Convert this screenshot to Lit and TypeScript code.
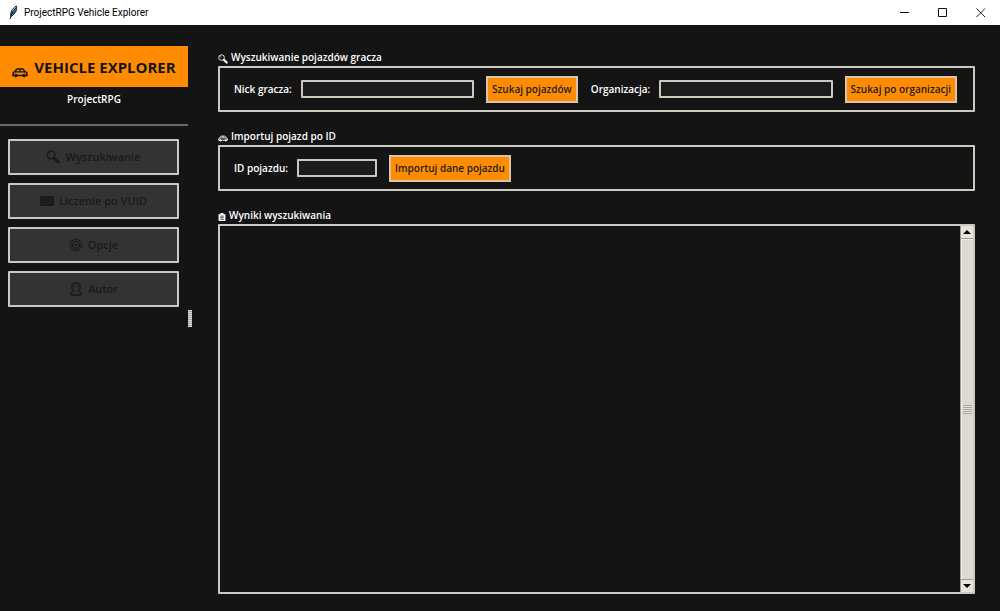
import { LitElement, html, css, svg } from "lit";
import { customElement } from "lit/decorators.js";

const lens = svg`<circle cx="5" cy="5" r="3.9" fill="none" stroke="currentColor" stroke-width="1.2"/><path d="M8.4 8.4 L12.2 12" stroke="currentColor" stroke-width="3" stroke-linecap="round"/><path d="M2.8 5 A2.2 2.2 0 0 1 5 2.8" fill="none" stroke="currentColor" stroke-width=".6"/>`;
const keypad = svg`<path d="M0 2H14V12H0Z" fill="currentColor"/><path d="M1.5 4.5H12.5M1.5 7H12.5M1.5 9.5H12.5" stroke="#333" stroke-width=".6" stroke-dasharray="1.6 .8"/>`;
const gear = svg`<circle cx="7" cy="7" r="5.6" fill="none" stroke="currentColor" stroke-width="1.3" stroke-dasharray="3.4 .6"/><circle cx="7" cy="7" r="3.6" fill="none" stroke="currentColor" stroke-width="1"/><circle cx="7" cy="7" r="1.2" fill="currentColor"/><path d="M7 3.6V5M7 9V10.4M3.6 7H5M9 7H10.4" stroke="currentColor" stroke-width=".8"/>`;
const person = svg`<path d="M2 13V11.6C2 10 3.4 9.4 4.8 9 3.2 7.8 2.7 6.2 2.7 4.8 2.7 2.4 4.6 1 7 1S11.3 2.4 11.3 4.8C11.3 6.2 10.8 7.8 9.2 9 10.6 9.4 12 10 12 11.6V13Z" fill="none" stroke="currentColor" stroke-width="1.3"/><path d="M3 4.8C5 4.8 6.6 4.4 7.4 3.2 8.2 4.4 9.4 4.8 11 4.8" fill="none" stroke="currentColor" stroke-width="1"/>`;
const car = svg`<path d="M1 10.6V8.4C1 7.6 1.8 7 3 6.8L4.4 4.4C4.6 4.1 5 4 5.4 4H10.6C11 4 11.4 4.1 11.6 4.5L12.8 6.8C14.4 6.9 15 7.6 15 8.6V10.6Z" fill="none" stroke="currentColor" stroke-width="1.5"/><path d="M3 6.9H13M8 4V6.9" stroke="currentColor" stroke-width="1.2"/><circle cx="3.8" cy="10.6" r="1.8" fill="currentColor"/><circle cx="12.2" cy="10.6" r="1.8" fill="currentColor"/>`;
const clipboard = svg`<path d="M1 2H13V14H1Z" fill="currentColor"/><path d="M4.5 0H9.5V3H4.5Z" fill="currentColor"/><path d="M4 5.5H10M4 8.2H10M4 11H10" stroke="#141414" stroke-width="1.3"/>`;

const icon = (shape: unknown, cls: string, box = "0 0 14 14") =>
  html`<svg class=${cls} viewBox=${box} aria-hidden="true">${shape}</svg>`;

@customElement("app-root")
export class AppRoot extends LitElement {
  static styles = css`
    :host {
      display: flex;
      flex-direction: column;
      min-height: 100vh;
      background: #141414;
      color: #fff;
      font: 650 10px/16px "Open Sans", "Noto Sans", sans-serif;
    }
    * { box-sizing: border-box; }
    button, input, textarea { font: inherit; color: inherit; margin: 0; border-radius: 0; }
    svg { display: block; flex: none; }
    .titlebar {
      display: flex;
      align-items: center;
      height: 25px;
      padding-left: 8px;
      background: #fff;
      color: #000;
      font: 10px/16px Roboto, "Open Sans", sans-serif;
    }
    .feather { width: 11px; height: 15px; margin-right: 5px; }
    .caption { flex: 1; }
    .win {
      display: grid;
      place-items: center;
      width: 38px;
      height: 25px;
      padding: 0;
      border: 0;
      background: none;
    }
    .win svg { width: 10px; height: 10px; }
    .body { flex: 1; display: flex; }
    .side { width: 188px; padding-top: 21px; }
    .brand {
      display: flex;
      align-items: center;
      justify-content: center;
      gap: 6px;
      height: 41px;
      background: #ff8c00;
      color: #141414;
      font-size: 15px;
      font-weight: 700;
      line-height: 20px;
      white-space: nowrap;
    }
    .brand h1 { font: inherit; margin: 0; }
    .brand-icon { width: 16px; height: 14px; margin-top: 10px; }
    .sub { margin: 0; padding: 4px 0 17px; text-align: center; border-bottom: 2px solid #6a6a68; }
    .nav { display: grid; gap: 8px; padding: 13px 9px 0 8px; }
    .nav button {
      display: flex;
      align-items: center;
      justify-content: center;
      gap: 5px;
      height: 36px;
      border: 2px solid #ccc9c1;
      border-radius: 1px;
      background: #333;
      color: #191919;
      font-size: 11px;
    }
    .nav-icon { width: 14px; height: 14px; }
    .sash {
      align-self: center;
      width: 4px;
      height: 17px;
      background: repeating-linear-gradient(#dcdad5 0 1px, #aaa69f 1px 2px);
    }
    .main { flex: 1; min-width: 0; display: flex; flex-direction: column; gap: 16px; padding: 24px 25px 17px 26px; }
    .group { display: flex; flex-direction: column; }
    .group.grow { flex: 1; }
    .head { display: flex; align-items: center; gap: 3px; margin: 0; height: 17px; padding-bottom: 2px; font: inherit; }
    .head-icon { width: 10px; height: 10px; margin-top: 4px; }
    .head-icon.slim { width: 8px; }
    .frame {
      display: flex;
      align-items: center;
      height: 46px;
      padding: 0 16px 0 14px;
      border: 2px solid #ccc9c1;
      border-radius: 1px;
    }
    .grow .frame { flex: 1; height: auto; align-items: stretch; padding: 0; }
    .frame input {
      flex: 1;
      min-width: 0;
      height: 18px;
      margin: 0 12px 0 9px;
      padding: 0 4px;
      border: 2px solid #ccc9c1;
      border-radius: 1px;
      background: #1c1c1c;
    }
    .frame input.short { flex: 0 1 80px; }
    .act {
      height: 27px;
      padding: 0 4px;
      border: 2px solid #d8c5aa;
      background: #ff8c00;
      color: #1c1c1c;
      white-space: nowrap;
    }
    .act.mid { margin-right: 13px; }
    .out { flex: 1; min-width: 0; padding: 4px; border: 0; background: #141414; resize: none; overflow: hidden; }
    .bar {
      display: flex;
      flex-direction: column;
      width: 13px;
      border-left: 1px solid #9e9a91;
      background: #dcdad5;
    }
    .arrow { display: grid; place-items: center; height: 12px; padding: 0; border: 0; background: #e6e4df; }
    .arrow svg { width: 8px; height: 4px; }
    .thumb {
      flex: 1;
      display: grid;
      place-items: center;
      border: 1px solid #9e9a91;
      border-width: 1px 0;
      box-shadow: inset 1px 1px #efedea;
    }
    .grip { width: 9px; height: 9px; background: repeating-linear-gradient(#aaa69f 0 1px, #e4e2dd 1px 2px); }
  `;

  render() {
    return html`
      <header class="titlebar">
        <svg class="feather" viewBox="0 0 11 15">
          <path d="M3 11.5C2 8 3.8 3.5 8.4 1 9.4 4 8 8.5 3 11.5Z" fill="#3d6f9e" stroke="#1b2730" stroke-width="1"/>
          <path d="M2 14C3 10 5 6 7.6 3" fill="none" stroke="#111" stroke-width="1"/>
          <path d="M4.6 6C5.4 4.4 6.4 3.2 7.8 2.2" fill="none" stroke="#a9cbe6" stroke-width="1"/>
        </svg>
        <span class="caption">ProjectRPG Vehicle Explorer</span>
        <button class="win" aria-label="Minimalizuj"><svg viewBox="0 0 10 10"><path d="M0 4.5H9" stroke="#111"/></svg></button>
        <button class="win" aria-label="Maksymalizuj"><svg viewBox="0 0 10 10"><path d="M.5 .5H8.5V8.5H.5Z" fill="none" stroke="#111"/></svg></button>
        <button class="win" aria-label="Zamknij"><svg viewBox="0 0 10 10"><path d="M.5 .5L9 9M9 .5L.5 9" stroke="#222"/></svg></button>
      </header>
      <div class="body">
        <aside class="side">
          <div class="brand">${icon(car, "brand-icon", "0 0 16 14")}<h1>VEHICLE EXPLORER</h1></div>
          <p class="sub">ProjectRPG</p>
          <nav class="nav">
            <button>${icon(lens, "nav-icon")}Wyszukiwanie</button>
            <button>${icon(keypad, "nav-icon")}Liczenie po VUID</button>
            <button>${icon(gear, "nav-icon")}Opcje</button>
            <button>${icon(person, "nav-icon")}Autor</button>
          </nav>
        </aside>
        <div class="sash"></div>
        <main class="main">
          <section class="group">
            <h2 class="head">${icon(lens, "head-icon")}Wyszukiwanie pojazdów gracza</h2>
            <div class="frame">
              <label for="nick">Nick gracza:</label><input id="nick" type="text">
              <button class="act mid">Szukaj pojazdów</button>
              <label for="org">Organizacja:</label><input id="org" type="text">
              <button class="act">Szukaj po organizacji</button>
            </div>
          </section>
          <section class="group">
            <h2 class="head">${icon(car, "head-icon", "0 0 16 14")}Importuj pojazd po ID</h2>
            <div class="frame">
              <label for="vid">ID pojazdu:</label><input id="vid" class="short" type="text">
              <button class="act">Importuj dane pojazdu</button>
            </div>
          </section>
          <section class="group grow">
            <h2 class="head">${icon(clipboard, "head-icon slim")}Wyniki wyszukiwania</h2>
            <div class="frame">
              <textarea class="out" readonly aria-label="Wyniki wyszukiwania"></textarea>
              <div class="bar">
                <button class="arrow" aria-label="W górę"><svg viewBox="0 0 8 4"><path d="M0 4L4 0L8 4Z"/></svg></button>
                <div class="thumb"><div class="grip"></div></div>
                <button class="arrow" aria-label="W dół"><svg viewBox="0 0 8 4"><path d="M0 0H8L4 4Z"/></svg></button>
              </div>
            </div>
          </section>
        </main>
      </div>
    `;
  }
}
